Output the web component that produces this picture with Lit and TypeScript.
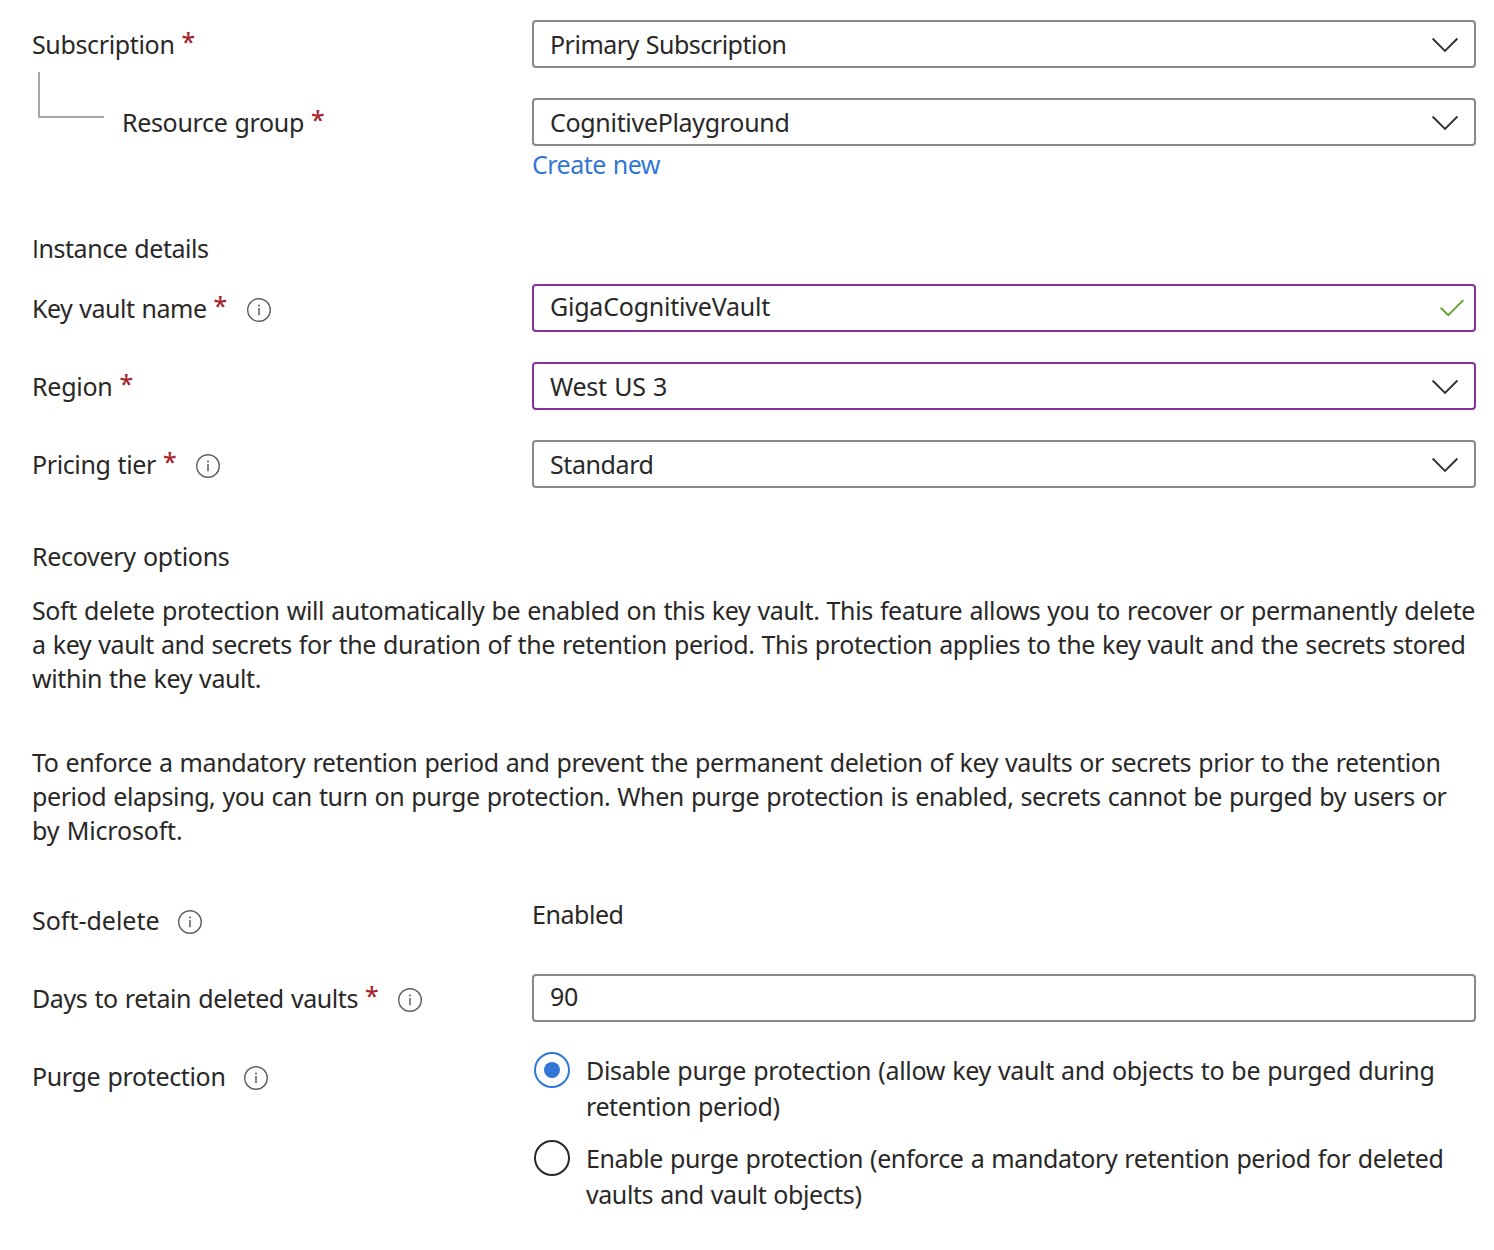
import { LitElement, html, css, svg, nothing } from "lit";
import { customElement, property } from "lit/decorators.js";

/** One line of text, tracked so that its advance equals `width`. */
@customElement("tracked-text")
class TrackedText extends LitElement {
  @property() text = "";
  @property({ type: Number }) width = 0;

  static styles = css`
    :host { display: block; white-space: pre; flex: none; }
    .line { display: inline-block; word-spacing: 1px; }
    .plain { font-family: "Open Sans", sans-serif; }
  `;

  updated() {
    const line = this.renderRoot.querySelector(".line") as HTMLElement;
    line.style.letterSpacing = "0px";
    const natural = line.getBoundingClientRect().width;
    line.style.letterSpacing = `${(this.width - natural) / this.text.length}px`;
    this.style.width = `${this.width}px`;
  }

  render() {
    const capitalI = this.text.startsWith("I");
    return html`<span class="line">${capitalI ? html`<span class="plain">I</span>` : nothing}${capitalI ? this.text.slice(1) : this.text}</span>`;
  }
}

@customElement("field-label")
class FieldLabel extends LitElement {
  @property() text = "";
  @property({ type: Number }) width = 0;
  @property({ type: Boolean }) required = false;
  @property({ type: Boolean }) info = false;

  static styles = css`
    :host { display: flex; align-items: flex-start; padding-top: 7px; }
    .star { color: #a4262c; width: 14px; margin: -3px 0 0 7px; font-weight: 500; }
    .info { display: block; width: 26px; height: 26px; margin: 6px 0 0 17px; }
    .required-info { margin-left: 18px; }
  `;

  render() {
    return html`
      <tracked-text .text=${this.text} .width=${this.width}></tracked-text>
      ${this.required ? html`<span class="star">*</span>` : nothing}
      ${this.info
        ? html`<svg class="info ${this.required ? "required-info" : ""}" viewBox="0 0 26 26" fill="none">
            <circle cx="13" cy="13" r="11.3" stroke="#605e5c" stroke-width="1.4" />
            <path d="M13 11v7.2" stroke="#605e5c" stroke-width="1.5" />
            <circle cx="13" cy="8.4" r="1" fill="#605e5c" />
          </svg>`
        : nothing}
    `;
  }
}

@customElement("form-box")
class FormBox extends LitElement {
  @property() text = "";
  @property({ type: Number }) width = 0;
  @property() kind = "select";
  @property({ type: Boolean }) edited = false;

  static styles = css`
    :host { display: block; }
    .box {
      box-sizing: border-box; height: 48px; border: 2px solid #8a8886; border-radius: 4px;
      display: flex; align-items: center; justify-content: space-between; padding: 0 16px;
    }
    .edited { border-color: #8730a4; }
    .input { padding-bottom: 4px; padding-right: 9px; }
    .chevron { width: 28px; height: 16px; margin-right: -1px; margin-top: 1px; }
    .check { width: 26px; height: 18px; margin-top: 3px; }
  `;

  icon() {
    if (this.kind === "select")
      return html`<svg class="chevron" viewBox="0 0 28 16" fill="none">${svg`<path d="M1.6 1.5 14 14 26.4 1.5" stroke="#323130" stroke-width="1.9"/>`}</svg>`;
    if (this.kind === "valid")
      return html`<svg class="check" viewBox="0 0 26 18" fill="none">${svg`<path d="M1.7 8.8 9.3 16.2 24.3 1.2" stroke="#5ea22c" stroke-width="1.9"/>`}</svg>`;
    return nothing;
  }

  render() {
    return html`<div class="box ${this.edited ? "edited" : ""} ${this.kind === "select" ? "" : "input"}">
      <tracked-text .text=${this.text} .width=${this.width}></tracked-text>${this.icon()}
    </div>`;
  }
}

type Line = [string, number];

@customElement("radio-option")
class RadioOption extends LitElement {
  @property({ type: Boolean }) checked = false;
  @property({ attribute: false }) lines: Line[] = [];

  static styles = css`
    :host { display: flex; line-height: 36px; padding-left: 2px; gap: 16px; }
    .ring {
      box-sizing: border-box; width: 36px; height: 36px; flex: none; border: 2px solid #292827;
      border-radius: 50%; display: grid; place-items: center;
    }
    .on { border-color: #3277d5; }
    .dot { width: 16px; height: 16px; border-radius: 50%; background: #3277d5; }
  `;

  render() {
    return html`
      <div class="ring ${this.checked ? "on" : ""}">${this.checked ? html`<div class="dot"></div>` : nothing}</div>
      <div>${this.lines.map(([t, w]) => html`<tracked-text .text=${t} .width=${w}></tracked-text>`)}</div>
    `;
  }
}

@customElement("app-root")
class AppRoot extends LitElement {
  static styles = css`
    :host {
      display: block; box-sizing: border-box; width: 1494px; height: 1250px; overflow: hidden;
      padding: 20px 18px 0 32px; background: #fff; color: #292827;
      font: 25px/34px "Noto Sans", "Open Sans", sans-serif;
    }
    .row { display: grid; grid-template-columns: 500px 944px; min-height: 48px; margin-bottom: 30px; }
    .nested { display: flex; align-items: flex-start; }
    .elbow {
      box-sizing: border-box; width: 66px; height: 46px; margin: -26px 18px 0 6px;
      border-left: 2px solid #a6a6a6; border-bottom: 2px solid #a6a6a6;
    }
    .group { margin-bottom: 50px; }
    .link { color: #3277d5; padding-top: 1px; }
    .heading { margin-bottom: 19px; }
    .last { margin-bottom: 51px; }
    .recovery { margin-bottom: 20px; }
    .copy { margin-bottom: 50px; }
    .final { margin-bottom: 49px; }
    .value { padding-top: 1px; }
    .radios { display: flex; flex-direction: column; gap: 16px; }
  `;

  lines(items: Line[]) {
    return items.map(([t, w]) => html`<tracked-text .text=${t} .width=${w}></tracked-text>`);
  }

  render() {
    return html`
      <div class="row">
        <field-label text="Subscription" width="142.5" required></field-label>
        <form-box text="Primary Subscription" width="236.5"></form-box>
      </div>
      <div class="row group">
        <div class="nested">
          <div class="elbow"></div>
          <field-label text="Resource group" width="182" required></field-label>
        </div>
        <div>
          <form-box text="CognitivePlayground" width="239.5"></form-box>
          <div class="link">${this.lines([["Create new", 128]])}</div>
        </div>
      </div>
      <div class="heading">${this.lines([["Instance details", 176.5]])}</div>
      <div class="row">
        <field-label text="Key vault name" width="174.5" required info></field-label>
        <form-box text="GigaCognitiveVault" width="220" kind="valid" edited></form-box>
      </div>
      <div class="row">
        <field-label text="Region" width="80.5" required></field-label>
        <form-box text="West US 3" width="117" edited></form-box>
      </div>
      <div class="row last">
        <field-label text="Pricing tier" width="124" required info></field-label>
        <form-box text="Standard" width="103.5"></form-box>
      </div>
      <div class="recovery">${this.lines([["Recovery options", 197.5]])}</div>
      <div class="copy">
        ${this.lines([
          ["Soft delete protection will automatically be enabled on this key vault. This feature allows you to recover or permanently delete", 1443],
          ["a key vault and secrets for the duration of the retention period. This protection applies to the key vault and the secrets stored", 1433.5],
          ["within the key vault.", 229],
        ])}
      </div>
      <div class="copy final">
        ${this.lines([
          ["To enforce a mandatory retention period and prevent the permanent deletion of key vaults or secrets prior to the retention", 1408.5],
          ["period elapsing, you can turn on purge protection. When purge protection is enabled, secrets cannot be purged by users or", 1414.5],
          ["by Microsoft.", 150.5],
        ])}
      </div>
      <div class="row">
        <field-label text="Soft-delete" width="127.5" info></field-label>
        <div class="value">${this.lines([["Enabled", 91.5]])}</div>
      </div>
      <div class="row">
        <field-label text="Days to retain deleted vaults" width="326" required info></field-label>
        <form-box text="90" width="28" kind="input"></form-box>
      </div>
      <div class="row">
        <field-label text="Purge protection" width="193.5" info></field-label>
        <div class="radios">
          <radio-option checked .lines=${[
            ["Disable purge protection (allow key vault and objects to be purged during", 848.5],
            ["retention period)", 193.5],
          ]}></radio-option>
          <radio-option .lines=${[
            ["Enable purge protection (enforce a mandatory retention period for deleted", 857.5],
            ["vaults and vault objects)", 275.5],
          ]}></radio-option>
        </div>
      </div>
    `;
  }
}
